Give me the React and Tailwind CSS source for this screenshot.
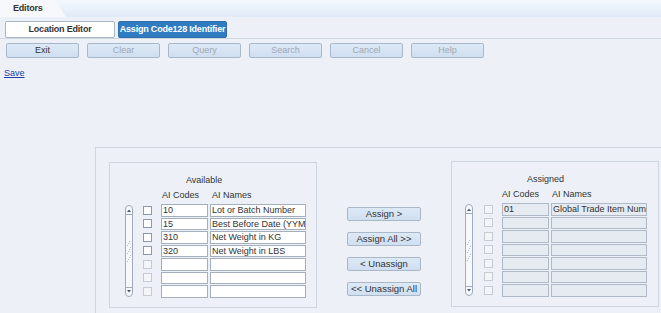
import React from 'react';

const available = [
  { code: '10', name: 'Lot or Batch Number' },
  { code: '15', name: 'Best Before Date (YYMMDD)' },
  { code: '310', name: 'Net Weight in KG' },
  { code: '320', name: 'Net Weight in LBS' },
  { code: '', name: '' },
  { code: '', name: '' },
  { code: '', name: '' },
];

const assigned = [
  { code: '01', name: 'Global Trade Item Number' },
  { code: '', name: '' },
  { code: '', name: '' },
  { code: '', name: '' },
  { code: '', name: '' },
  { code: '', name: '' },
  { code: '', name: '' },
];

const ScrollBar = () => (
  <svg width="8" height="92" viewBox="0 0 8 92" className="shrink-0">
    <rect x="0.5" y="0.5" width="7" height="91" rx="3.5" fill="#f6f8fb" stroke="#9fabba" />
    <polygon points="2,7 6,7 4,4.5" fill="#4a5563" />
    <line x1="1" y1="9.5" x2="7" y2="9.5" stroke="#9fabba" />
    <line x1="1" y1="82.5" x2="7" y2="82.5" stroke="#9fabba" />
    <polygon points="2,85 6,85 4,87.5" fill="#4a5563" />
    {/* grip */}
    <g fill="#b5bfcb">
      <rect x="4" y="36" width="1" height="1" />
      <rect x="3" y="38" width="1" height="1" />
      <rect x="2" y="40" width="1" height="1" />
      <rect x="5" y="42" width="1" height="1" />
      <rect x="4" y="44" width="1" height="1" />
      <rect x="3" y="46" width="1" height="1" />
      <rect x="2" y="48" width="1" height="1" />
      <rect x="5" y="50" width="1" height="1" />
      <rect x="4" y="52" width="1" height="1" />
      <rect x="3" y="54" width="1" height="1" />
      <rect x="2" y="56" width="1" height="1" />
    </g>
  </svg>
);

const ListPanel = ({ title, rows, disabled, titlePad, scrollPad, checkPad }) => (
  <div className="w-[208px] h-[146px] shrink-0 border border-[#cdd5df] pt-[12px] text-[9px] text-[#333]">
    <div className={`h-[11px] leading-[11px] ${titlePad}`}>{title}</div>
    <div className="mt-[4px] flex h-[11px] leading-[11px]">
      <span className={`w-[50px] ${disabled ? 'ml-[50px]' : 'ml-[52px]'}`}>AI Codes</span>
      <span>AI Names</span>
    </div>
    <div className="mt-[3px] flex">
      <div className={`mt-[1px] ${scrollPad}`}>
        <ScrollBar />
      </div>
      <div className={`flex flex-col gap-[1px] ${checkPad}`}>
        {rows.map((r, i) => {
          const empty = !r.code;
          return (
            <div key={i} className="flex items-center h-[12.5px]">
              <div
                className={`w-[9px] h-[9px] border ${
                  disabled || empty ? 'border-[#c3cbd5] bg-[#f3f5f8]' : 'border-[#8d99a8] bg-white'
                }`}
              />
              <div
                className={`ml-[9px] w-[47px] h-[12.5px] border px-[1px] leading-[11px] overflow-hidden whitespace-nowrap ${
                  disabled
                    ? 'bg-[#e6ebf1] border-[#b0bac6]'
                    : 'bg-white border-[#a3afbd]'
                }`}
              >
                {r.code}
              </div>
              <div
                className={`ml-[2px] w-[96px] h-[12.5px] border px-[1px] leading-[11px] overflow-hidden whitespace-nowrap ${
                  disabled
                    ? 'bg-[#e6ebf1] border-[#b0bac6]'
                    : 'bg-white border-[#a3afbd]'
                }`}
              >
                {r.name}
              </div>
            </div>
          );
        })}
      </div>
    </div>
  </div>
);

const ToolButton = ({ label, active }) => (
  <div
    className={`w-[73px] h-[15px] shrink-0 flex items-center justify-center border rounded-[2px] bg-gradient-to-b from-[#dde9f6] to-[#cfdff1] border-[#a9b8c9] text-[9px] ${
      active ? 'text-[#333]' : 'text-[#a0a8b2]'
    }`}
  >
    {label}
  </div>
);

const MoveButton = ({ label }) => (
  <div className="w-[74px] h-[14px] flex items-center justify-center border rounded-[2px] bg-gradient-to-b from-[#dde9f6] to-[#cfdff1] border-[#a9b8c9] text-[9.5px] text-[#333] whitespace-nowrap">
    {label}
  </div>
);

export default function App() {
  return (
    <div className="w-[661px] h-[313px] overflow-hidden bg-[#edf1f7] font-['Liberation_Sans',Arial,sans-serif]">
      {/* header strip */}
      <div className="h-[17px] bg-gradient-to-b from-[#f3f8fd] to-[#e0ebf7] flex">
        <div className="w-[66px] h-[17px] bg-[#f6f8fb] [clip-path:polygon(0_0,84%_0,100%_100%,0_100%)] pl-[13px] text-[9px] font-bold text-[#333] leading-[17px] tracking-[-0.2px]">
          Editors
        </div>
      </div>

      {/* tabs */}
      <div className="h-[22px] border-b border-[#cfd7e1] pt-[4px] pl-[5px] flex gap-[3px]">
        <div className="w-[110px] h-[17px] bg-white border border-[#aab6c4] rounded-[2px] flex items-center justify-center text-[9px] font-bold text-[#333] tracking-[-0.2px]">
          Location Editor
        </div>
        <div className="w-[109px] h-[17px] bg-[#2f7cc3] border border-[#2f6ea8] rounded-[2px] flex items-center justify-center text-[9px] font-bold text-white tracking-[-0.2px]">
          Assign Code128 Identifier
        </div>
      </div>

      {/* toolbar */}
      <div className="mt-[4px] pl-[6px] flex gap-[8px]">
        <ToolButton label="Exit" active />
        <ToolButton label="Clear" />
        <ToolButton label="Query" />
        <ToolButton label="Search" />
        <ToolButton label="Cancel" />
        <ToolButton label="Help" />
      </div>

      <div className="mt-[10px] pl-[4px] h-[11px] leading-[11px] text-[9px]">
        <a className="text-[#1b3fa6] underline">Save</a>
      </div>

      {/* main panel */}
      <div className="mt-[68px] ml-[95px] h-[200px] border-t border-l border-[#cdd5df] pt-[14px] pl-[13px] flex">
        <ListPanel
          title="Available"
          rows={available}
          titlePad="pl-[76px]"
          scrollPad="ml-[15px]"
          checkPad="ml-[10px]"
        />
        <div className="ml-[30px] pt-[45px] flex flex-col gap-[11px]">
          <MoveButton label="Assign >" />
          <MoveButton label="Assign All >>" />
          <MoveButton label="< Unassign" />
          <MoveButton label="<< Unassign All" />
        </div>
        <div className="ml-[30px] -mt-[1px]">
          <ListPanel
            title="Assigned"
            rows={assigned}
            disabled
            titlePad="pl-[75px]"
            scrollPad="ml-[13px]"
            checkPad="ml-[11px]"
          />
        </div>
      </div>
    </div>
  );
}
